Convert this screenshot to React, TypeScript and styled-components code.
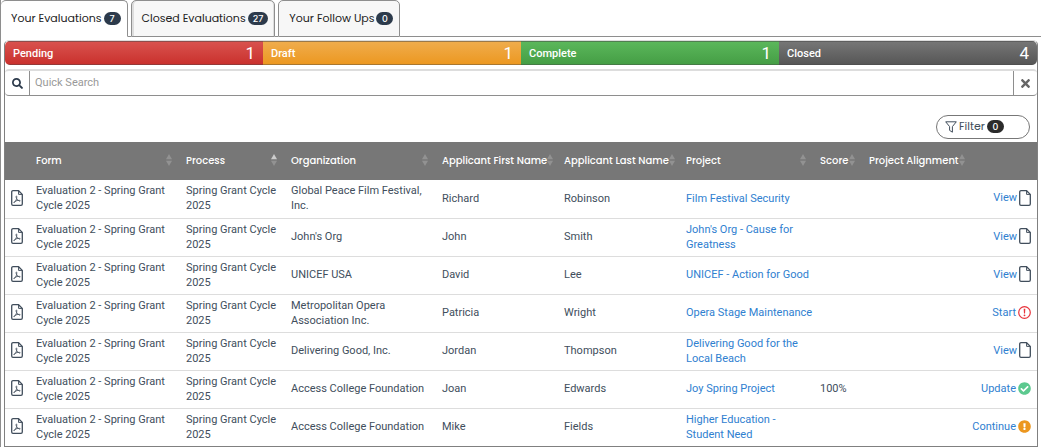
import React from "react";
import styled, { createGlobalStyle } from "styled-components";
import { FaSearch, FaTimes, FaCheckCircle, FaExclamationCircle } from "react-icons/fa";

const Global = createGlobalStyle`
  * { box-sizing: border-box; }
  body {
    margin: 0;
    background: #fff;
    color: #414e5c;
    font: 11px/15px Roboto, sans-serif;
  }
  button, input { font: inherit; color: inherit; }
  svg { flex: none; }
`;

const headingFont = `Poppins, Inter, sans-serif`;

const Page = styled.main`
  display: flex;
  flex-direction: column;
`;

const Tabs = styled.div`
  display: flex;
  border-left: 1px solid #8e8e8e;

  &::after {
    content: "";
    flex: 1;
    border-bottom: 1px solid #8e8e8e;
  }
`;

const TabGap = styled.span`
  width: 3px;
  border-bottom: 1px solid #8e8e8e;
`;

const Tab = styled.button<{ $active?: boolean; $raised?: boolean }>`
  display: flex;
  align-items: center;
  gap: 2px;
  height: 37px;
  padding: 0 6px 1px 10px;
  border: 1px solid #8e8e8e;
  border-left-width: ${(p) => (p.$active ? 0 : 1)}px;
  border-bottom-color: ${(p) => (p.$active ? "#fff" : "#8e8e8e")};
  border-radius: 5px 5px 0 0;
  background: ${(p) => (p.$active ? "#fff" : "#f7f7f7")};
  box-shadow: ${(p) => (p.$raised ? "inset 2px 0 #ddd, inset -1px 0 #ddd" : "none")};
  color: #222;
  font-family: ${headingFont};
  white-space: nowrap;
`;

const Badge = styled.span<{ $dark?: boolean }>`
  min-width: 17px;
  padding: 0 5px;
  border-radius: 7px;
  background: ${(p) => (p.$dark ? "#2b2b2b" : "#2c3a4b")};
  color: #fff;
  font: 500 9px/13px Inter, sans-serif;
  text-align: center;
`;

const Frame = styled.div`
  padding: 3px 3px 0;
  border-left: 1px solid #8e8e8e;
`;

const Panel = styled.section`
  border: 1px solid #808080;
  border-top-color: #ddd;
  border-radius: 5px 5px 0 0;
`;

const StatusBar = styled.div`
  display: grid;
  grid-template-columns: repeat(4, 1fr);
  overflow: hidden;
  border-radius: 5px;
`;

const Status = styled.button<{ $from: string; $to: string }>`
  display: flex;
  align-items: center;
  justify-content: space-between;
  height: 24px;
  padding: 0 8px;
  border: 0;
  background: linear-gradient(${(p) => p.$from}, ${(p) => p.$to});
  box-shadow: inset 0 1px rgba(70, 70, 70, 0.5), inset 0 -1px rgba(70, 70, 70, 0.4);
  color: #fff;
  font-weight: 500;
`;

const StatusCount = styled.span`
  font-size: 17px;
  font-weight: 400;
`;

const Search = styled.form`
  display: flex;
  height: 27px;
  margin-top: 4px;
  border: solid #8e8e8e;
  border-width: 2px 0 1px;
  border-top-color: #ddd;
  border-radius: 4px;
`;

const SearchButton = styled.button<{ $last?: boolean }>`
  display: flex;
  align-items: center;
  justify-content: center;
  width: ${(p) => (p.$last ? 24 : 25)}px;
  padding: 0;
  border: 0 solid #8e8e8e;
  border-${(p) => (p.$last ? "left" : "right")}-width: 1px;
  background: none;
  color: ${(p) => (p.$last ? "#666" : "#2c3a4b")};
`;

const SearchInput = styled.input`
  flex: 1;
  min-width: 0;
  padding: 0 5px 2px;
  border: 0;
  outline: 0;
  background: none;

  &::placeholder { color: #999; opacity: 1; }
`;

const Toolbar = styled.div`
  display: flex;
  justify-content: flex-end;
  padding: 19px 7px 3px;
`;

const FilterButton = styled.button`
  display: flex;
  align-items: center;
  gap: 2px;
  width: 94px;
  height: 24px;
  padding: 0 8px 1px;
  border: 1px solid #777;
  border-radius: 12px;
  background: #fff;
  font-family: ${headingFont};
`;

const Table = styled.table`
  width: 100%;
  table-layout: fixed;
  border-collapse: collapse;
`;

const Col = styled.col<{ $share: number }>`
  width: ${(p) => (p.$share / 1032) * 100}%;
`;

const Head = styled.th`
  height: 38px;
  padding: 0 9px 2px 5px;
  background: #777;
  color: #fff;
  font-family: ${headingFont};
  font-size: 10px;
  font-weight: 500;
  text-align: left;
  white-space: nowrap;
`;

const HeadContent = styled.span`
  display: flex;
  align-items: center;
  justify-content: space-between;
`;

const Row = styled.tr`
  & + & { border-top: 1px solid #ddd; }
`;

const Cell = styled.td`
  height: 38px;
  padding: 3px 0 4px 5px;
`;

const Link = styled.a`
  color: #2f80d0;
  text-decoration: none;
`;

const IconCell = styled(Cell)`
  padding: 2px 0 0 6px;

  svg { display: block; }
`;

const PdfButton = styled.button`
  padding: 0;
  border: 0;
  background: none;
`;

const ActionCell = styled(Cell)`
  padding: 0 6px 2px 0;
`;

const Action = styled(Link)`
  display: flex;
  align-items: center;
  justify-content: flex-end;
  gap: 2px;
`;

const SortIcon = ({ up }: { up?: boolean }) => (
  <svg width="6" height="12" viewBox="0 0 6 12" aria-hidden="true">
    <path d="M0 5.2 3 0l3 5.2z" fill={up ? "#ccc" : "#929292"} />
    <path d="M0 6.8h6L3 12z" fill="#929292" />
  </svg>
);

const FunnelIcon = () => (
  <svg width="12" height="12" viewBox="0 0 12 12" fill="none" stroke="#414e5c" strokeLinejoin="round" aria-hidden="true">
    <path d="M.7.8h10.6L7.4 5.6v5.6L4.6 9.4V5.6z" />
  </svg>
);

const PageIcon = ({ pdf }: { pdf?: boolean }) => (
  <svg width="12" height="16" viewBox="0 0 12 16" fill="none" stroke="#414e5c" strokeWidth="1.3" strokeLinejoin="round" aria-hidden="true">
    <path d="M2 .7h5.6l3.7 3.7V14a1.3 1.3 0 0 1-1.3 1.3H2A1.3 1.3 0 0 1 .7 14V2A1.3 1.3 0 0 1 2 .7z" />
    <path d="M7.6.9v3.5h3.5" strokeWidth="1" />
    {pdf && (
      <path
        d="M5.4 6c-.5 0-.5 1 0 2.2.6 1.3 1.6 2.4 3.1 2.9.9.2 1.1-.5.2-.7-1.700-.2-3.700.3-5.300 1.300-.9.6-.7 1.300 0 .9C4.800 11.500 5.900 8.700 5.800 6.600c0-.4-.1-.6-.4-.6z"
        strokeWidth=".8"
      />
    )}
  </svg>
);

const AlertIcon = () => (
  <svg width="13" height="13" viewBox="0 0 13 13" aria-hidden="true">
    <circle cx="6.5" cy="6.5" r="5.8" fill="none" stroke="#e8343c" strokeWidth="1.2" />
    <path d="M5.7 2.8h1.6L7 7.6H6z" fill="#e8343c" />
    <circle cx="6.5" cy="9.3" r=".9" fill="#e8343c" />
  </svg>
);

const tabs = [
  { label: "Your Evaluations", count: 7, active: true },
  { label: "Closed Evaluations", count: 27, raised: true },
  { label: "Your Follow Ups", count: 0 },
];

const statuses = [
  { label: "Pending", count: 1, from: "#d9534f", to: "#c9302c" },
  { label: "Draft", count: 1, from: "#f0ad4e", to: "#ec971f" },
  { label: "Complete", count: 1, from: "#5cb85c", to: "#449d44" },
  { label: "Closed", count: 4, from: "#777", to: "#555" },
];

const columns = [
  { label: "Form", share: 150 },
  { label: "Process", share: 105, sorted: true },
  { label: "Organization", share: 151 },
  { label: "Applicant First Name", share: 122 },
  { label: "Applicant Last Name", share: 122 },
  { label: "Project", share: 134 },
  { label: "Score", share: 49 },
  { label: "Project Alignment", share: 107 },
];

const rows = [
  { org: "Global Peace Film Festival, Inc.", first: "Richard", last: "Robinson", project: "Film Festival Security", score: "", action: "View" },
  { org: "John's Org", first: "John", last: "Smith", project: "John's Org - Cause for Greatness", score: "", action: "View" },
  { org: "UNICEF USA", first: "David", last: "Lee", project: "UNICEF - Action for Good", score: "", action: "View" },
  { org: "Metropolitan Opera Association Inc.", first: "Patricia", last: "Wright", project: "Opera Stage Maintenance", score: "", action: "Start" },
  { org: "Delivering Good, Inc.", first: "Jordan", last: "Thompson", project: "Delivering Good for the Local Beach", score: "", action: "View" },
  { org: "Access College Foundation", first: "Joan", last: "Edwards", project: "Joy Spring Project", score: "100%", action: "Update" },
  { org: "Access College Foundation", first: "Mike", last: "Fields", project: "Higher Education - Student Need", score: "", action: "Continue" },
];

const actionIcons: Record<string, React.ReactNode> = {
  View: <PageIcon />,
  Start: <AlertIcon />,
  Update: <FaCheckCircle size={13} color="#5cc98f" />,
  Continue: <FaExclamationCircle size={13} color="#ec971f" />,
};

export default function App() {
  return (
    <Page>
      <Global />
      <Tabs role="tablist">
        {tabs.map((t, i) => (
          <React.Fragment key={t.label}>
            {i > 0 && <TabGap />}
            <Tab role="tab" aria-selected={!!t.active} $active={t.active} $raised={t.raised}>
              {t.label} <Badge>{t.count}</Badge>
            </Tab>
          </React.Fragment>
        ))}
      </Tabs>
      <Frame>
        <Panel>
          <StatusBar>
            {statuses.map((s) => (
              <Status key={s.label} $from={s.from} $to={s.to}>
                {s.label} <StatusCount>{s.count}</StatusCount>
              </Status>
            ))}
          </StatusBar>
          <Search onSubmit={(e) => e.preventDefault()}>
            <SearchButton type="submit" aria-label="Search"><FaSearch size={11} /></SearchButton>
            <SearchInput placeholder="Quick Search" aria-label="Quick Search" />
            <SearchButton type="reset" aria-label="Clear search" $last><FaTimes size={13} /></SearchButton>
          </Search>
          <Toolbar>
            <FilterButton>
              <FunnelIcon /> Filter <Badge $dark>0</Badge>
            </FilterButton>
          </Toolbar>
          <Table>
            <colgroup>
              <Col $share={26} />
              {columns.map((c) => <Col key={c.label} $share={c.share} />)}
              <Col $share={66} />
            </colgroup>
            <thead>
              <tr>
                <Head as="td" />
                {columns.map((c) => (
                  <Head key={c.label} scope="col" aria-sort={c.sorted ? "ascending" : undefined}>
                    <HeadContent>{c.label}<SortIcon up={c.sorted} /></HeadContent>
                  </Head>
                ))}
                <Head as="td" />
              </tr>
            </thead>
            <tbody>
              {rows.map((r) => (
                <Row key={r.project}>
                  <IconCell><PdfButton aria-label="Open PDF"><PageIcon pdf /></PdfButton></IconCell>
                  <Cell>Evaluation 2 - Spring Grant Cycle 2025</Cell>
                  <Cell>Spring Grant Cycle 2025</Cell>
                  <Cell>{r.org}</Cell>
                  <Cell>{r.first}</Cell>
                  <Cell>{r.last}</Cell>
                  <Cell><Link href="#project">{r.project}</Link></Cell>
                  <Cell>{r.score}</Cell>
                  <Cell />
                  <ActionCell><Action href="#evaluation">{r.action}{actionIcons[r.action]}</Action></ActionCell>
                </Row>
              ))}
            </tbody>
          </Table>
        </Panel>
      </Frame>
    </Page>
  );
}
